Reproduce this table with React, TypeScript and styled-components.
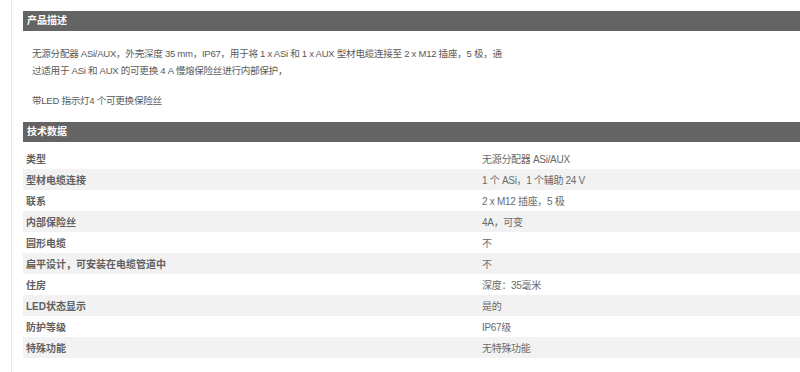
import React from "react";
import styled, { createGlobalStyle } from "styled-components";

const Global = createGlobalStyle`
  html, body { margin: 0; padding: 0; background: #ffffff; overflow: hidden; }
  body { font-family: "Liberation Sans Narrow", "Liberation Sans", "Noto Sans CJK SC", sans-serif; }
`;

const Page = styled.div`
  margin-left: 11px;
  border-left: 1px solid #e8e8e8;
  padding: 11px 0 14px 11px;
  min-height: 347px;
  box-sizing: border-box;
`;

const SectionHeader = styled.div`
  height: 20px;
  background: #646464;
  color: #ffffff;
  font-family: "Liberation Sans", "Noto Sans CJK SC", sans-serif;
  font-size: 10px;
  font-weight: 700;
  line-height: 20px;
  padding-left: 4px;
`;

const Description = styled.div`
  padding: 14px 9px 0 9px;
  margin-bottom: 13px;
`;

const Paragraph = styled.p`
  margin: 0 0 13px 0;
  font-size: 9.6px;
  letter-spacing: -0.3px;
  line-height: 17px;
  color: #5a5a5a;
  white-space: nowrap;
`;

const Table = styled.div`
  margin-top: 6px;
  display: flex;
  flex-direction: column;
`;

const Row = styled.div<{ $striped: boolean }>`
  display: grid;
  grid-template-columns: 459px 1fr;
  height: 21px;
  align-items: center;
  background: ${(p) => (p.$striped ? "#f2f2f2" : "#ffffff")};
`;

const Label = styled.div`
  padding-left: 3px;
  font-family: "Liberation Sans", "Noto Sans CJK SC", sans-serif;
  font-size: 10px;
  font-weight: 700;
  color: #606060;
`;

const Value = styled.div`
  font-size: 10px;
  letter-spacing: -0.3px;
  color: #6a6a6a;
`;

const rows: [string, string][] = [
  ["类型", "无源分配器 ASi/AUX"],
  ["型材电缆连接", "1 个 ASi，1 个辅助 24 V"],
  ["联系", "2 x M12 插座，5 极"],
  ["内部保险丝", "4A，可变"],
  ["圆形电缆", "不"],
  ["扁平设计，可安装在电缆管道中", "不"],
  ["住房", "深度：35毫米"],
  ["LED状态显示", "是的"],
  ["防护等级", "IP67级"],
  ["特殊功能", "无特殊功能"],
];

export default function App() {
  return (
    <>
      <Global />
      <Page>
        <SectionHeader>产品描述</SectionHeader>
        <Description>
          <Paragraph>
            无源分配器 ASi/AUX，外壳深度 35 mm，IP67，用于将 1 x ASi 和 1 x AUX 型材电缆连接至 2 x M12 插座，5 极，通
            <br />
            过适用于 ASi 和 AUX 的可更换 4 A 慢熔保险丝进行内部保护，
          </Paragraph>
          <Paragraph>带LED 指示灯4 个可更换保险丝</Paragraph>
        </Description>
        <SectionHeader>技术数据</SectionHeader>
        <Table>
          {rows.map(([k, v], i) => (
            <Row key={k} $striped={i % 2 === 1}>
              <Label>{k}</Label>
              <Value>{v}</Value>
            </Row>
          ))}
        </Table>
      </Page>
    </>
  );
}
